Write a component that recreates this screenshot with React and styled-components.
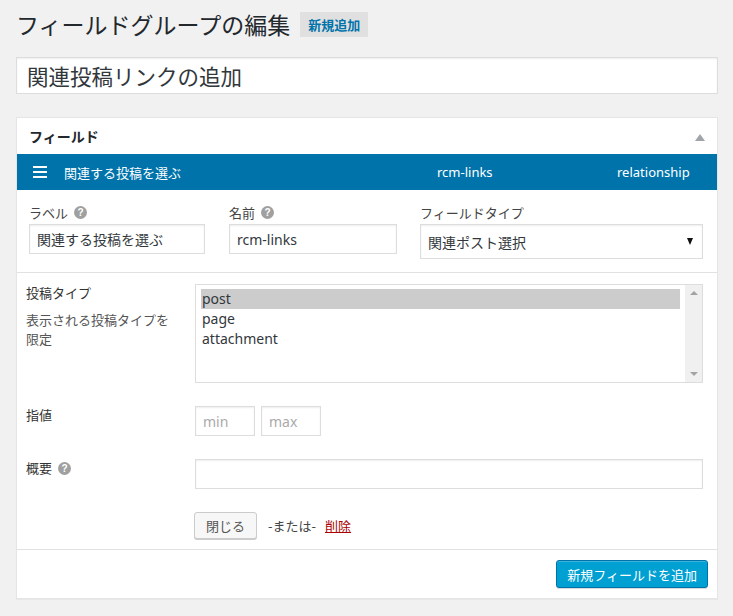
import styled, { createGlobalStyle } from 'styled-components'

const GlobalStyle = createGlobalStyle`
  html, body {
    margin: 0;
    padding: 0;
    background: #f1f1f1;
  }
  body {
    font-family: "Noto Sans", "Noto Sans CJK JP", sans-serif;
    color: #32373c;
    font-size: 13px;
  }
`

const Page = styled.div`
  padding: 9px 15px 18px 16px;
`

const TitleRow = styled.div`
  display: flex;
  align-items: center;
  height: 31px;
  margin-bottom: 17px;
`

const PageTitle = styled.h1`
  margin: 0;
  font-size: 23px;
  font-weight: 400;
  color: #23282d;
  line-height: 31px;
  font-family: "Noto Sans CJK JP", sans-serif;
`

const AddNewBadge = styled.span`
  margin-left: 10px;
  height: 25px;
  padding: 0 8px;
  display: flex;
  align-items: center;
  background: #e0e0e0;
  color: #0073aa;
  font-size: 13px;
  font-weight: 600;
  font-family: "Noto Sans CJK JP", sans-serif;
`

const TitleInput = styled.div`
  height: 35px;
  border: 1px solid #ddd;
  background: #fff;
  box-shadow: inset 0 1px 2px rgba(0, 0, 0, 0.07);
  display: flex;
  align-items: center;
  padding-left: 10px;
  font-size: 21.5px;
  color: #32373c;
  font-family: "Noto Sans CJK JP", sans-serif;
  margin-bottom: 23px;
`

const Panel = styled.section`
  background: #fff;
  border: 1px solid #e5e5e5;
  box-shadow: 0 1px 1px rgba(0, 0, 0, 0.04);
`

const PanelHeader = styled.div`
  height: 36px;
  display: flex;
  align-items: center;
  justify-content: space-between;
  padding: 0 12px 0 12px;
  font-size: 14px;
  font-weight: 700;
  color: #23282d;
  font-family: "Noto Sans CJK JP", sans-serif;
`

const CollapseArrow = styled.span`
  width: 0;
  height: 0;
  border-left: 5px solid transparent;
  border-right: 5px solid transparent;
  border-bottom: 7px solid #a0a5aa;
  margin-top: 2px;
`

const FieldBar = styled.div`
  height: 36px;
  background: #0073aa;
  color: #fff;
  display: grid;
  grid-template-columns: 404px 180px 1fr;
  align-items: center;
  padding-left: 16px;
  font-size: 13px;
`

const BarLabel = styled.div`
  display: flex;
  align-items: center;
  gap: 17px;
  font-family: "Noto Sans CJK JP", sans-serif;
`

const Hamburger = styled.span`
  display: flex;
  flex-direction: column;
  gap: 3px;
  width: 14px;
  & > i {
    display: block;
    height: 2px;
    background: #fff;
  }
`

const SettingsRow = styled.div`
  display: grid;
  grid-template-columns: 200px 191px 1fr;
  padding: 12px 14px 13px 12px;
  border-bottom: 1px solid #e1e1e1;
`

const SettingCol = styled.div`
  display: flex;
  flex-direction: column;
  align-items: flex-start;
`

const SmallLabel = styled.div`
  display: flex;
  align-items: center;
  gap: 6px;
  height: 20px;
  margin-bottom: 2px;
  font-family: "Noto Sans CJK JP", sans-serif;
  font-size: 13px;
  color: #444;
`

const HelpIcon = styled.span`
  width: 13px;
  height: 13px;
  border-radius: 50%;
  background: #a0a0a0;
  color: #fff;
  font-size: 10px;
  font-weight: 700;
  line-height: 13px;
  text-align: center;
  font-family: "Liberation Sans", sans-serif;
`

const TextBox = styled.div`
  box-sizing: border-box;
  width: ${(p) => p.$w || '100%'};
  height: ${(p) => p.$h || 30}px;
  border: 1px solid #ddd;
  background: #fff;
  box-shadow: inset 0 1px 2px rgba(0, 0, 0, 0.07);
  display: flex;
  align-items: center;
  justify-content: space-between;
  padding: 0 7px;
  font-size: 14px;
  color: ${(p) => (p.$placeholder ? '#aaa' : '#32373c')};
  font-family: "Noto Sans", "Noto Sans CJK JP", sans-serif;
`

const SelectArrow = styled.span`
  width: 0;
  height: 0;
  border-left: 3.5px solid transparent;
  border-right: 3.5px solid transparent;
  border-top: 7px solid #111;
  margin-right: 2px;
`

const OptionsTable = styled.div`
  display: flex;
  flex-direction: column;
  gap: 23px;
  padding: 11px 14px 10px 0;
  border-bottom: 1px solid #e1e1e1;
`

const OptionRow = styled.div`
  display: grid;
  grid-template-columns: 178px 1fr;
`

const RowLabel = styled.div`
  padding-left: 9px;
  font-family: "Noto Sans CJK JP", sans-serif;
  font-size: 13px;
  line-height: 18px;
  color: #333;
`

const LabelTitle = styled.div`
  display: flex;
  align-items: center;
  gap: 6px;
  margin-bottom: 8px;
`

const Description = styled.div`
  color: #555;
  line-height: 19px;
`

const ListBox = styled.div`
  box-sizing: border-box;
  height: 99px;
  border: 1px solid #ddd;
  background: #fff;
  display: flex;
`

const ListItems = styled.div`
  flex: 1;
  padding: 4px 5px;
`

const ListItem = styled.div`
  height: 20px;
  line-height: 20px;
  padding-left: 1px;
  font-size: 14px;
  color: #32373c;
  background: ${(p) => (p.$selected ? '#cccccc' : 'transparent')};
`

const ScrollTrack = styled.div`
  width: 17px;
  background: #f0f0f0;
  display: flex;
  flex-direction: column;
  justify-content: space-between;
  align-items: center;
  padding: 6px 0;
`

const ScrollArrow = styled.span`
  width: 0;
  height: 0;
  border-left: 4px solid transparent;
  border-right: 4px solid transparent;
  ${(p) =>
    p.$up
      ? 'border-bottom: 4px solid #a3a3a3;'
      : 'border-top: 4px solid #a3a3a3;'}
`

const InlineFields = styled.div`
  display: flex;
  gap: 6px;
`

const Actions = styled.div`
  display: flex;
  align-items: center;
  gap: 9px;
  height: 27px;
  font-family: "Noto Sans CJK JP", sans-serif;
  font-size: 13px;
  color: #444;
`

const SecondaryButton = styled.button`
  box-sizing: border-box;
  height: 27px;
  padding: 0 11px;
  margin-left: -1px;
  margin-right: 2px;
  border: 1px solid #ccc;
  border-radius: 3px;
  background: #f7f7f7;
  box-shadow: 0 1px 0 #ccc;
  color: #555;
  font-size: 13px;
  font-family: "Noto Sans CJK JP", sans-serif;
`

const DeleteLink = styled.a`
  color: #a00;
  text-decoration: underline;
`

const PanelFooter = styled.div`
  display: flex;
  justify-content: flex-end;
  padding: 10px 9px 10px 0;
`

const PrimaryButton = styled.button`
  box-sizing: border-box;
  height: 28px;
  padding: 0 10px;
  border: 1px solid #0073aa;
  border-radius: 3px;
  background: #00a0d2;
  box-shadow: inset 0 1px 0 rgba(120, 200, 230, 0.5), 0 1px 0 rgba(0, 0, 0, 0.15);
  color: #fff;
  font-size: 13px;
  font-family: "Noto Sans CJK JP", sans-serif;
`

export default function App() {
  return (
    <>
      <GlobalStyle />
      <Page>
        <TitleRow>
          <PageTitle>フィールドグループの編集</PageTitle>
          <AddNewBadge>新規追加</AddNewBadge>
        </TitleRow>
        <TitleInput>関連投稿リンクの追加</TitleInput>

        <Panel>
          <PanelHeader>
            <span>フィールド</span>
            <CollapseArrow />
          </PanelHeader>
          <FieldBar>
            <BarLabel>
              <Hamburger>
                <i />
                <i />
                <i />
              </Hamburger>
              関連する投稿を選ぶ
            </BarLabel>
            <div>rcm-links</div>
            <div>relationship</div>
          </FieldBar>

          <SettingsRow>
            <SettingCol>
              <SmallLabel>
                ラベル <HelpIcon>?</HelpIcon>
              </SmallLabel>
              <TextBox $w="176px">関連する投稿を選ぶ</TextBox>
            </SettingCol>
            <SettingCol>
              <SmallLabel>
                名前 <HelpIcon>?</HelpIcon>
              </SmallLabel>
              <TextBox $w="168px">rcm-links</TextBox>
            </SettingCol>
            <SettingCol>
              <SmallLabel>フィールドタイプ</SmallLabel>
              <TextBox $h={35}>
                関連ポスト選択
                <SelectArrow />
              </TextBox>
            </SettingCol>
          </SettingsRow>

          <OptionsTable>
            <OptionRow>
              <RowLabel>
                <LabelTitle>投稿タイプ</LabelTitle>
                <Description>
                  表示される投稿タイプを
                  <br />
                  限定
                </Description>
              </RowLabel>
              <ListBox>
                <ListItems>
                  <ListItem $selected>post</ListItem>
                  <ListItem>page</ListItem>
                  <ListItem>attachment</ListItem>
                </ListItems>
                <ScrollTrack>
                  <ScrollArrow $up />
                  <ScrollArrow />
                </ScrollTrack>
              </ListBox>
            </OptionRow>

            <OptionRow>
              <RowLabel>
                <LabelTitle>指値</LabelTitle>
              </RowLabel>
              <InlineFields>
                <TextBox $w="60px" $placeholder>
                  min
                </TextBox>
                <TextBox $w="60px" $placeholder>
                  max
                </TextBox>
              </InlineFields>
            </OptionRow>

            <OptionRow>
              <RowLabel>
                <LabelTitle>
                  概要 <HelpIcon>?</HelpIcon>
                </LabelTitle>
              </RowLabel>
              <TextBox />
            </OptionRow>

            <OptionRow>
              <div />
              <Actions>
                <SecondaryButton>閉じる</SecondaryButton>
                <span>-または-</span>
                <DeleteLink>削除</DeleteLink>
              </Actions>
            </OptionRow>
          </OptionsTable>

          <PanelFooter>
            <PrimaryButton>新規フィールドを追加</PrimaryButton>
          </PanelFooter>
        </Panel>
      </Page>
    </>
  )
}
